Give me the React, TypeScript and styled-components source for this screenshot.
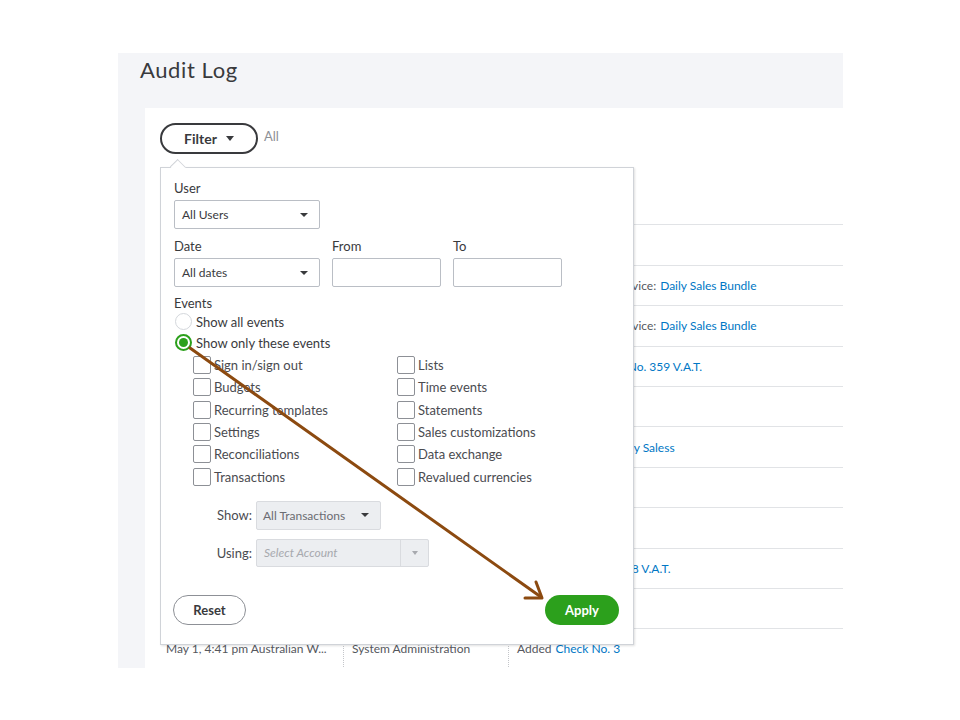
import React from "react";
import styled, { createGlobalStyle } from "styled-components";

const GlobalStyle = createGlobalStyle`
  html, body { margin: 0; padding: 0; background: #ffffff; }
  body { font-family: Lato, "Open Sans", Arial, sans-serif; color: #393a3d; }
  * { box-sizing: border-box; }
`;

const Page = styled.div`
  position: relative;
  width: 960px;
  height: 720px;
  padding: 53px 0 0 118px;
`;

const Frame = styled.div`
  width: 725px;
  height: 615px;
  overflow: hidden;
  background: #f4f5f8;
`;

const Title = styled.h1`
  margin: 0;
  padding: 3px 0 0 22px;
  height: 55px;
  font-size: 22px;
  line-height: 28px;
  font-weight: 400;
  letter-spacing: 0.6px;
  color: #393a3d;
`;

const Card = styled.div`
  position: relative;
  margin-left: 27px;
  width: 760px;
  height: 600px;
  background: #ffffff;
  padding: 15px 0 0 15px;
`;

const FilterBar = styled.div`
  display: flex;
  align-items: center;
  gap: 6px;
`;

const FilterButton = styled.button`
  display: flex;
  align-items: center;
  justify-content: center;
  gap: 9px;
  width: 98px;
  height: 31px;
  border: 2px solid #393a3d;
  border-radius: 16px;
  background: #fff;
  font-family: inherit;
  font-size: 14px;
  font-weight: 700;
  color: #393a3d;
  padding: 0 0 0 0;
`;

const Caret = styled.span<{ $color?: string; $w?: number }>`
  display: inline-block;
  width: 0;
  height: 0;
  border-left: ${(p) => (p.$w ?? 8) / 2}px solid transparent;
  border-right: ${(p) => (p.$w ?? 8) / 2}px solid transparent;
  border-top: ${(p) => Math.round(((p.$w ?? 8) / 2) * 1.1)}px solid ${(p) => p.$color ?? "#393a3d"};
`;

const AllText = styled.span`
  font-size: 13px;
  color: #8d9096;
  margin-top: -5px;
`;

const Table = styled.div`
  margin-top: 31px;
  width: 745px;
`;

const Row = styled.div`
  display: grid;
  grid-template-columns: 183px 165px 1fr;
  height: 40.4px;
  border-bottom: 1px solid #e1e3e6;
  font-size: 12px;
  color: #55575d;
`;

const Cell = styled.div<{ $sep?: boolean }>`
  display: flex;
  align-items: center;
  padding-left: ${(p) => (p.$sep ? 8 : 6)}px;
  white-space: nowrap;
  overflow: hidden;
  border-left: ${(p) => (p.$sep ? "1px dotted #c4c6ca" : "none")};
`;

const Link = styled.span`
  color: #0077c5;
  margin-left: 4px;
`;

const Popover = styled.div`
  position: absolute;
  top: 59px;
  left: 15px;
  width: 474px;
  height: 478px;
  background: #fff;
  border: 1px solid #d0d3d8;
  box-shadow: 1px 1px 2px rgba(0, 0, 0, 0.12);
  padding: 12px 14px 19px 13px;
  display: flex;
  flex-direction: column;
  z-index: 2;

  &::before {
    content: "";
    position: absolute;
    top: -7px;
    left: 11px;
    width: 11px;
    height: 11px;
    background: #fff;
    border-left: 1px solid #d0d3d8;
    border-top: 1px solid #d0d3d8;
    transform: rotate(45deg) scaleY(0.9);
  }
`;

const FieldLabel = styled.div<{ $mt?: number; $mb?: number }>`
  font-size: 13px;
  line-height: 16px;
  color: #393a3d;
  margin-top: ${(p) => p.$mt ?? 0}px;
  margin-bottom: ${(p) => p.$mb ?? 4}px;
`;

const SelectBox = styled.div<{ $w: number; $h?: number; $muted?: boolean }>`
  display: flex;
  align-items: center;
  justify-content: space-between;
  width: ${(p) => p.$w}px;
  height: ${(p) => p.$h ?? 29}px;
  border: 1px solid ${(p) => (p.$muted ? "#d9dbdf" : "#babec5")};
  border-radius: 2px;
  background: ${(p) => (p.$muted ? "#eceef1" : "#fff")};
  padding: 0 11px 0 ${(p) => (p.$muted ? 6 : 7)}px;
  font-size: 12px;
  color: ${(p) => (p.$muted ? "#6b6c72" : "#393a3d")};
`;

const TextInput = styled.div`
  width: 109px;
  height: 29px;
  border: 1px solid #babec5;
  border-radius: 2px;
  background: #fff;
`;

const DateRow = styled.div`
  display: flex;
  gap: 12px;
  margin-top: 9px;
`;

const DateCol = styled.div`
  display: flex;
  flex-direction: column;
`;

const RadioRow = styled.div`
  display: flex;
  align-items: center;
  height: 21px;
  gap: 4px;
  font-size: 13px;
  color: #393a3d;
`;

const Radio = styled.span<{ $checked?: boolean }>`
  position: relative;
  width: 17px;
  height: 17px;
  margin-left: 1px;
  border-radius: 50%;
  border: ${(p) => (p.$checked ? "2px solid #2ca01c" : "1px solid #d4d7dc")};
  background: #fff;

  &::after {
    content: "";
    display: ${(p) => (p.$checked ? "block" : "none")};
    position: absolute;
    top: 2px;
    left: 2px;
    width: 9px;
    height: 9px;
    border-radius: 50%;
    background: #2ca01c;
  }
`;

const CheckGrid = styled.div`
  display: grid;
  grid-template-columns: 204px 1fr;
  grid-auto-rows: 22.3px;
  padding-left: 19px;
  margin-top: 1px;
`;

const CheckItem = styled.label`
  display: flex;
  align-items: center;
  gap: 3px;
  font-size: 13px;
  color: #4a4b50;
`;

const Box = styled.span`
  width: 18px;
  height: 18px;
  border: 1px solid #8d9096;
  border-radius: 2px;
  background: #fff;
`;

const SubRow = styled.div<{ $mt: number }>`
  display: flex;
  align-items: center;
  gap: 4px;
  padding-left: 41px;
  margin-top: ${(p) => p.$mt}px;
`;

const SubLabel = styled.span`
  width: 37px;
  text-align: right;
  font-size: 13px;
  color: #4a4b50;
`;

const DisabledSelect = styled.div`
  display: flex;
  align-items: stretch;
  width: 173px;
  height: 28px;
  border: 1px solid #d9dbdf;
  border-radius: 2px;
  background: #eceef1;
  font-size: 12px;
`;

const Placeholder = styled.span`
  flex: 1;
  display: flex;
  align-items: center;
  padding-left: 7px;
  font-style: italic;
  color: #a7a9ae;
`;

const CaretCell = styled.span`
  width: 28px;
  display: flex;
  align-items: center;
  justify-content: center;
  border-left: 1px solid #d9dbdf;
`;

const Actions = styled.div`
  margin-top: auto;
  display: flex;
  justify-content: space-between;
  align-items: center;
`;

const PillButton = styled.button<{ $primary?: boolean }>`
  height: 30px;
  width: ${(p) => (p.$primary ? 74 : 73)}px;
  border-radius: 15px;
  border: ${(p) => (p.$primary ? "none" : "1px solid #8d9096")};
  background: ${(p) => (p.$primary ? "#2ca01c" : "#fff")};
  color: ${(p) => (p.$primary ? "#fff" : "#393a3d")};
  font-family: inherit;
  font-size: 13px;
  font-weight: 700;
  margin-left: ${(p) => (p.$primary ? 0 : -1)}px;
`;

const Annotation = styled.svg`
  position: absolute;
  top: 0;
  left: 0;
  pointer-events: none;
  z-index: 5;
`;

type RowData = { date?: string; user?: string; pre?: string; link?: string };

// Rows lying under the open filter popover only keep the part of their text that shows.
const rows: RowData[] = [
  {},
  { pre: "Created Inventory Service:", link: "Daily Sales Bundle" },
  { pre: "Deleted Inventory Service:", link: "Daily Sales Bundle" },
  { pre: "Added", link: "Sales Receipt No. 359 V.A.T." },
  {},
  { pre: "Added Customer: ", link: "Daily Saless" },
  {},
  {},
  { pre: "Added", link: "Invoice No. 358 V.A.T." },
  {},
  { date: "May 1, 4:41 pm Australian W...", user: "System Administration", pre: "Added", link: "Check No. 3" },
];

const leftEvents = ["Sign in/sign out", "Budgets", "Recurring templates", "Settings", "Reconciliations", "Transactions"];
const rightEvents = ["Lists", "Time events", "Statements", "Sales customizations", "Data exchange", "Revalued currencies"];

export default function App() {
  const checkItems: string[] = [];
  leftEvents.forEach((l, i) => {
    checkItems.push(l, rightEvents[i]);
  });
  return (
    <Page>
      <GlobalStyle />
      <Frame>
        <Title>Audit Log</Title>
        <Card>
          <FilterBar>
            <FilterButton>
              Filter <Caret $w={9} />
            </FilterButton>
            <AllText>All</AllText>
          </FilterBar>
          <Table>
            <Row>
              <Cell />
              <Cell $sep />
              <Cell $sep />
            </Row>
            {rows.map((r, i) => (
              <Row key={i}>
                <Cell>{r.date}</Cell>
                <Cell $sep>{r.user}</Cell>
                <Cell $sep>
                  {r.pre}
                  {r.link && <Link>{r.link}</Link>}
                </Cell>
              </Row>
            ))}
          </Table>
          <Popover>
            <FieldLabel>User</FieldLabel>
            <SelectBox $w={146}>
              All Users <Caret $w={8} />
            </SelectBox>
            <DateRow>
              <DateCol>
                <FieldLabel>Date</FieldLabel>
                <SelectBox $w={146}>
                  All dates <Caret $w={8} />
                </SelectBox>
              </DateCol>
              <DateCol>
                <FieldLabel>From</FieldLabel>
                <TextInput />
              </DateCol>
              <DateCol>
                <FieldLabel>To</FieldLabel>
                <TextInput />
              </DateCol>
            </DateRow>
            <FieldLabel $mt={8} $mb={0}>
              Events
            </FieldLabel>
            <RadioRow>
              <Radio /> Show all events
            </RadioRow>
            <RadioRow>
              <Radio $checked /> Show only these events
            </RadioRow>
            <CheckGrid>
              {checkItems.map((c) => (
                <CheckItem key={c}>
                  <Box />
                  {c}
                </CheckItem>
              ))}
            </CheckGrid>
            <SubRow $mt={13}>
              <SubLabel>Show:</SubLabel>
              <SelectBox $w={125} $muted>
                All Transactions <Caret $w={8} />
              </SelectBox>
            </SubRow>
            <SubRow $mt={9}>
              <SubLabel>Using:</SubLabel>
              <DisabledSelect>
                <Placeholder>Select Account</Placeholder>
                <CaretCell>
                  <Caret $w={7} $color="#a7a9ae" />
                </CaretCell>
              </DisabledSelect>
            </SubRow>
            <Actions>
              <PillButton>Reset</PillButton>
              <PillButton $primary>Apply</PillButton>
            </Actions>
          </Popover>
        </Card>
      </Frame>
      <Annotation width={960} height={720} viewBox="0 0 960 720">
        <g stroke="#8c4a10" strokeWidth={3} strokeLinecap="round" fill="none">
          <line x1={190} y1={348} x2={541} y2={597} />
          <polyline points="536,582 542,598 525,598" strokeLinejoin="round" />
        </g>
      </Annotation>
    </Page>
  );
}
